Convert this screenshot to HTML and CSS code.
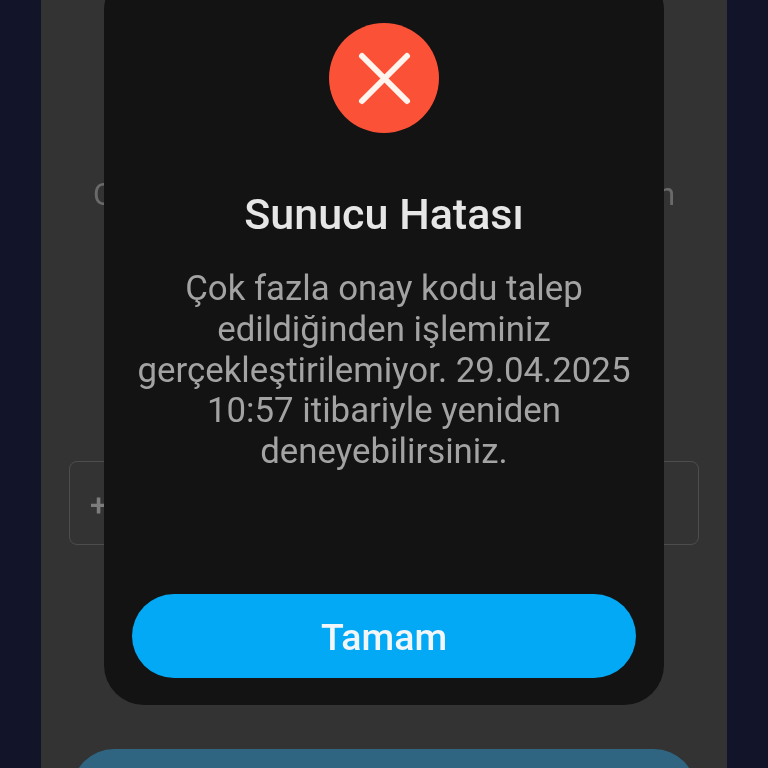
FILE: index.html
```html
<!DOCTYPE html>
<html lang="tr">
<head>
<meta charset="utf-8">
<title>Sunucu Hatası</title>
<link rel="stylesheet" href="styles.css">
</head>
<body>
<div class="stage">
  <main class="screen">
    <div class="under-text"><span>O</span><span>n</span></div>
    <div class="phone-input"><span class="plus">+</span></div>
    <div class="under-button"></div>
    <section class="modal">
      <div class="error-icon">
        <svg viewBox="0 0 110 110" width="110" height="110" aria-hidden="true">
          <path d="M33 33 L78 78 M78 33 L33 78" fill="none" stroke="#fff4ee" stroke-width="6" stroke-linecap="round"/>
        </svg>
      </div>
      <h1 class="title">Sunucu Hatası</h1>
      <p class="message">Çok fazla onay kodu talep edildiğinden işleminiz gerçekleştirilemiyor. 29.04.2025 10:57 itibariyle yeniden deneyebilirsiniz.</p>
      <button class="ok">Tamam</button>
    </section>
  </main>
</div>
</body>
</html>
```
FILE: styles.css
```css
html, body {
  margin: 0;
  padding: 0;
  height: 100%;
  background: #12142a;
  overflow: hidden;
}
.stage {
  height: 768px;
  display: flex;
  justify-content: center;
  filter: blur(0.4px);
}
.screen {
  position: relative;
  width: 686px;
  height: 768px;
  background: #333333;
  overflow: hidden;
  font-family: Roboto, "Liberation Sans", sans-serif;
  display: flex;
  flex-direction: column;
  box-sizing: border-box;
  padding: 176px 28px 0;
}
.under-text {
  display: flex;
  flex: none;
  justify-content: space-between;
  color: #6a6a6a;
  font-size: 31px;
  line-height: 38px;
  padding: 0 24px;
}
.phone-input {
  margin-top: 247px;
  height: 84px;
  flex: none;
  box-sizing: border-box;
  border: 1px solid #4d4d4d;
  border-radius: 8px;
  display: flex;
  align-items: center;
  padding: 4px 0 0 20px;
  color: #7c7c7c;
  font-size: 31px;
}
.plus { font-weight: 500; }
.under-button {
  margin: 204px 3px 0;
  height: 90px;
  flex: none;
  border-radius: 42px;
  background: #2f6580;
}
.modal {
  position: absolute;
  left: 63px;
  top: -30px;
  width: 560px;
  height: 735px;
  box-sizing: border-box;
  background: #131313;
  border-radius: 40px;
  padding: 53px 28px 27px;
  display: flex;
  flex-direction: column;
  align-items: center;
}
.error-icon {
  width: 110px;
  height: 110px;
  flex: none;
  border-radius: 50%;
  background: #fb5137;
}
.error-icon svg { display: block; }
.title {
  margin: 57px 0 0;
  color: #e6e6e6;
  font-size: 43px;
  line-height: 48px;
  font-weight: 500;
  text-align: center;
  white-space: nowrap;
}
.message {
  margin: 30px 0 0;
  width: 504px;
  color: #a3a3a3;
  font-size: 34.8px;
  line-height: 40.8px;
  font-weight: 400;
  text-align: center;
}
.ok {
  margin-top: auto;
  width: 504px;
  height: 84px;
  flex: none;
  border: 0;
  border-radius: 42px;
  background: #03a9f4;
  color: #f2f6f8;
  font-family: inherit;
  font-size: 37.5px;
  font-weight: 500;
  padding: 2px 0 0;
}
```
